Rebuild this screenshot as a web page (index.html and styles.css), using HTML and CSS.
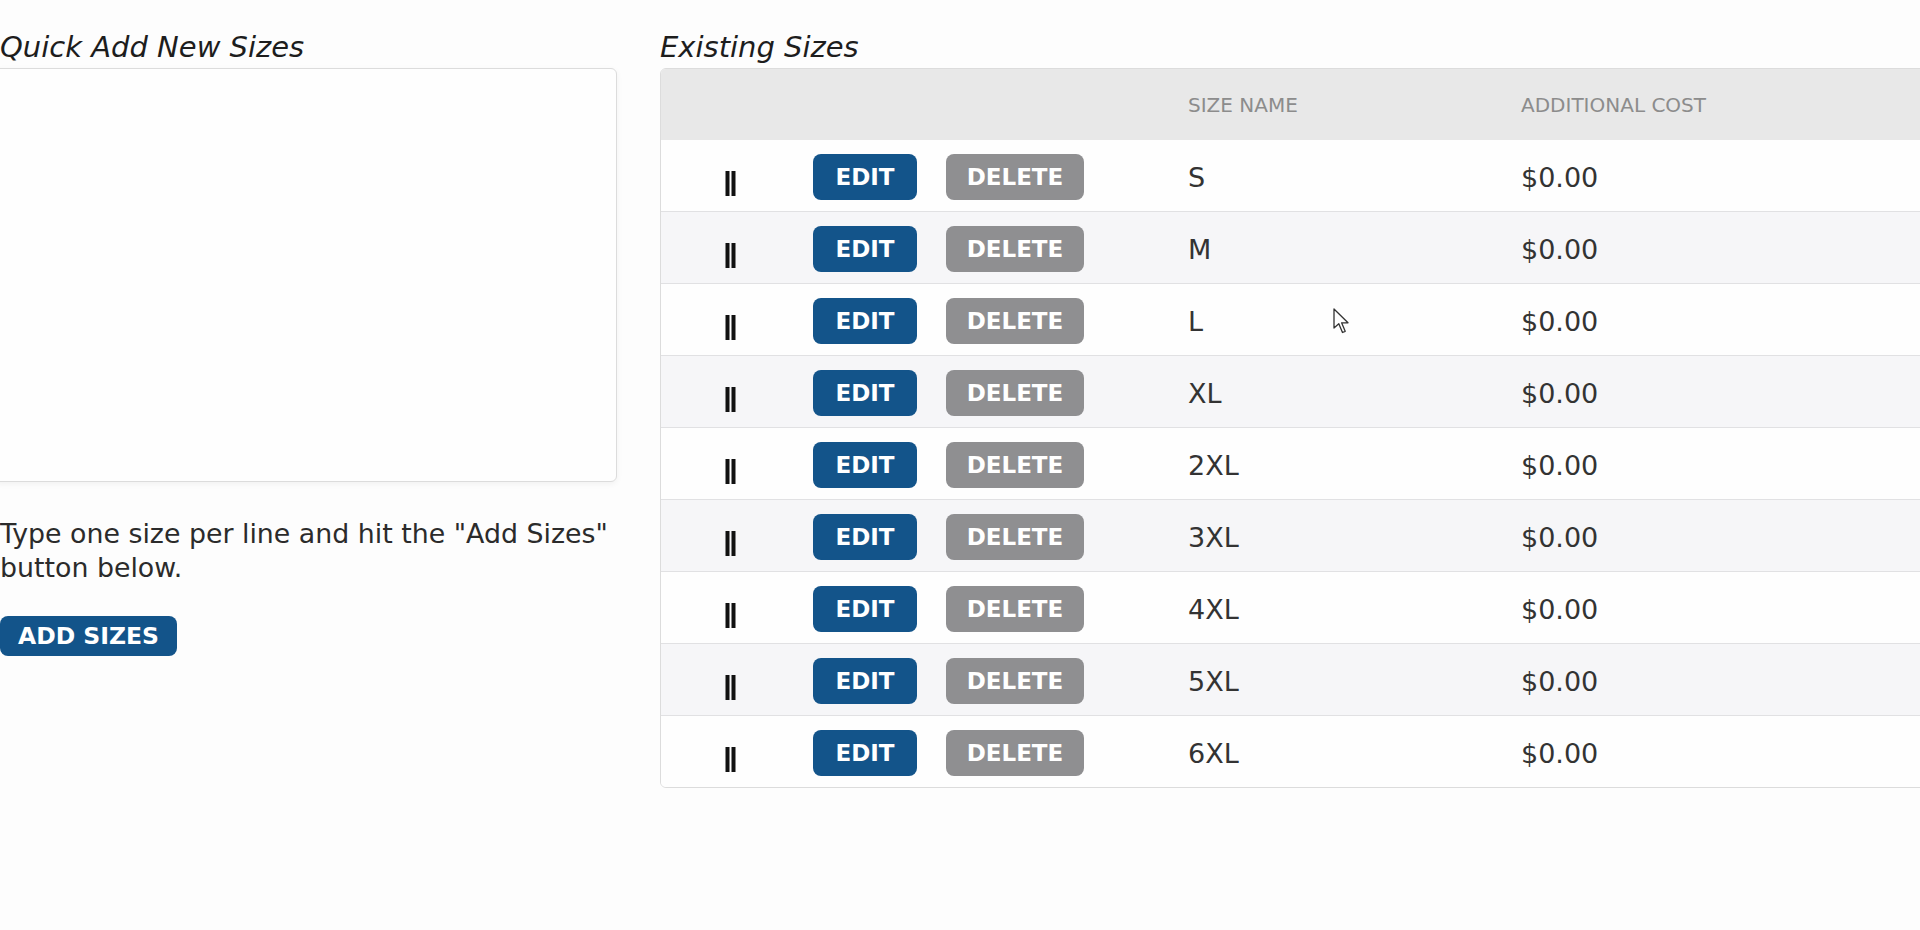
FILE: index.html
```html
<!DOCTYPE html>
<html>
<head>
	<meta charset="utf-8">
	<meta name="viewport" content="width=device-width, initial-scale=1">
	<title>Sizes</title>
	<link rel="stylesheet" href="styles.css">
</head>
<body>
	<div class="page">
		<div class="quick">
			<h2 class="title">Quick Add New Sizes</h2>
			<textarea class="sizes-input"></textarea>
			<p class="hint">Type one size per line and hit the "Add Sizes" button below.</p>
			<button class="btn btn-add">ADD SIZES</button>
		</div>
		<div class="existing">
			<h2 class="title">Existing Sizes</h2>
			<div class="grid">
				<div class="row head">
					<div></div>
					<div></div>
					<div class="col-name">SIZE NAME</div>
					<div class="col-cost">ADDITIONAL COST</div>
				</div>
				<div class="row">
					<div class="handle"><svg width="12" height="25" viewBox="0 0 12 25"><rect x="0.5" y="0" width="4" height="25"/><rect x="6.5" y="0" width="4" height="25"/></svg></div>
					<div class="actions"><button class="btn btn-edit">EDIT</button><button class="btn btn-delete">DELETE</button></div>
					<div class="col-name">S</div>
					<div class="col-cost">$0.00</div>
				</div>
				<div class="row">
					<div class="handle"><svg width="12" height="25" viewBox="0 0 12 25"><rect x="0.5" y="0" width="4" height="25"/><rect x="6.5" y="0" width="4" height="25"/></svg></div>
					<div class="actions"><button class="btn btn-edit">EDIT</button><button class="btn btn-delete">DELETE</button></div>
					<div class="col-name">M</div>
					<div class="col-cost">$0.00</div>
				</div>
				<div class="row">
					<div class="handle"><svg width="12" height="25" viewBox="0 0 12 25"><rect x="0.5" y="0" width="4" height="25"/><rect x="6.5" y="0" width="4" height="25"/></svg></div>
					<div class="actions"><button class="btn btn-edit">EDIT</button><button class="btn btn-delete">DELETE</button></div>
					<div class="col-name">L</div>
					<div class="col-cost">$0.00</div>
				</div>
				<div class="row">
					<div class="handle"><svg width="12" height="25" viewBox="0 0 12 25"><rect x="0.5" y="0" width="4" height="25"/><rect x="6.5" y="0" width="4" height="25"/></svg></div>
					<div class="actions"><button class="btn btn-edit">EDIT</button><button class="btn btn-delete">DELETE</button></div>
					<div class="col-name">XL</div>
					<div class="col-cost">$0.00</div>
				</div>
				<div class="row">
					<div class="handle"><svg width="12" height="25" viewBox="0 0 12 25"><rect x="0.5" y="0" width="4" height="25"/><rect x="6.5" y="0" width="4" height="25"/></svg></div>
					<div class="actions"><button class="btn btn-edit">EDIT</button><button class="btn btn-delete">DELETE</button></div>
					<div class="col-name">2XL</div>
					<div class="col-cost">$0.00</div>
				</div>
				<div class="row">
					<div class="handle"><svg width="12" height="25" viewBox="0 0 12 25"><rect x="0.5" y="0" width="4" height="25"/><rect x="6.5" y="0" width="4" height="25"/></svg></div>
					<div class="actions"><button class="btn btn-edit">EDIT</button><button class="btn btn-delete">DELETE</button></div>
					<div class="col-name">3XL</div>
					<div class="col-cost">$0.00</div>
				</div>
				<div class="row">
					<div class="handle"><svg width="12" height="25" viewBox="0 0 12 25"><rect x="0.5" y="0" width="4" height="25"/><rect x="6.5" y="0" width="4" height="25"/></svg></div>
					<div class="actions"><button class="btn btn-edit">EDIT</button><button class="btn btn-delete">DELETE</button></div>
					<div class="col-name">4XL</div>
					<div class="col-cost">$0.00</div>
				</div>
				<div class="row">
					<div class="handle"><svg width="12" height="25" viewBox="0 0 12 25"><rect x="0.5" y="0" width="4" height="25"/><rect x="6.5" y="0" width="4" height="25"/></svg></div>
					<div class="actions"><button class="btn btn-edit">EDIT</button><button class="btn btn-delete">DELETE</button></div>
					<div class="col-name">5XL</div>
					<div class="col-cost">$0.00</div>
				</div>
				<div class="row">
					<div class="handle"><svg width="12" height="25" viewBox="0 0 12 25"><rect x="0.5" y="0" width="4" height="25"/><rect x="6.5" y="0" width="4" height="25"/></svg></div>
					<div class="actions"><button class="btn btn-edit">EDIT</button><button class="btn btn-delete">DELETE</button></div>
					<div class="col-name">6XL</div>
					<div class="col-cost">$0.00</div>
				</div>
			</div>
		</div>
	</div>
	<svg class="cursor" width="18" height="28" viewBox="0 0 18 28"><path d="M1 1 L1 20 L5.8 15.8 L9.5 24.5 L12.2 23.3 L8.6 14.8 L15 14.8 Z" fill="#fff" stroke="#333" stroke-width="1.3" stroke-linejoin="round"/></svg>
</body>
</html>
```

FILE: styles.css
```css
body{
	margin: 0;
	background: #fdfdfd;
	font-family: "DejaVu Sans", Verdana, sans-serif;
	color: #2b2b2b;
	overflow: hidden;
}
.page{
	display: flex;
	gap: 40px;
	padding-top: 30px;
}
.quick{
	width: 620px;
	flex: none;
}
.title{
	margin: 0;
	font-size: 29px;
	font-style: italic;
	font-weight: normal;
	line-height: 34px;
	color: #1d1d1d;
}
.sizes-input{
	display: block;
	box-sizing: border-box;
	width: 623px;
	height: 414px;
	margin: 4px 0 0 -6px;
	border: 1px solid #dcdcdc;
	border-radius: 6px;
	background: #fefefe;
	box-shadow: 0 2px 6px rgba(0, 0, 0, 0.05);
	resize: none;
}
.hint{
	margin: 35px 0 0;
	font-size: 26.8px;
	line-height: 34px;
}
.btn{
	border: none;
	color: #fff;
	font-family: "DejaVu Sans", Verdana, sans-serif;
	font-weight: bold;
	font-size: 23px;
	padding: 0;
	cursor: pointer;
}
.btn-add{
	margin-top: 31px;
	width: 177px;
	height: 40px;
	font-size: 23.5px;
	border-radius: 8px;
	background: #13548a;
}
.existing{
	flex: none;
	width: 1300px;
}
.grid{
	margin-top: 4px;
	border: 1px solid #dcdcdc;
	border-radius: 6px;
	overflow: hidden;
}
.row{
	display: grid;
	grid-template-columns: 139px 388px 333px 1fr;
	align-items: center;
	box-sizing: border-box;
	height: 72px;
	padding-top: 3px;
	border-bottom: 1px solid #e1e1e3;
	font-size: 27px;
	color: #333;
	background: #fefefe;
}
.row:nth-child(odd){
	background: #f6f6f8;
}
.row:last-child{
	border-bottom: none;
	height: 71px;
}
.row.head{
	height: 71px;
	padding-top: 0;
	border-bottom: none;
	background: #e8e8e8;
	font-size: 20px;
	color: #8c8c8c;
}
.handle{
	display: flex;
	justify-content: center;
	margin-top: 13px;
}
.handle svg{
	fill: #111;
}
.actions{
	display: flex;
	gap: 29px;
	padding-left: 13px;
}
.btn-edit,
.btn-delete{
	height: 46px;
	border-radius: 8px;
}
.btn-edit{
	width: 104px;
	background: #13548a;
}
.btn-delete{
	width: 138px;
	background: #8f8f91;
}
.cursor{
	position: absolute;
	left: 1333px;
	top: 308px;
}
```
